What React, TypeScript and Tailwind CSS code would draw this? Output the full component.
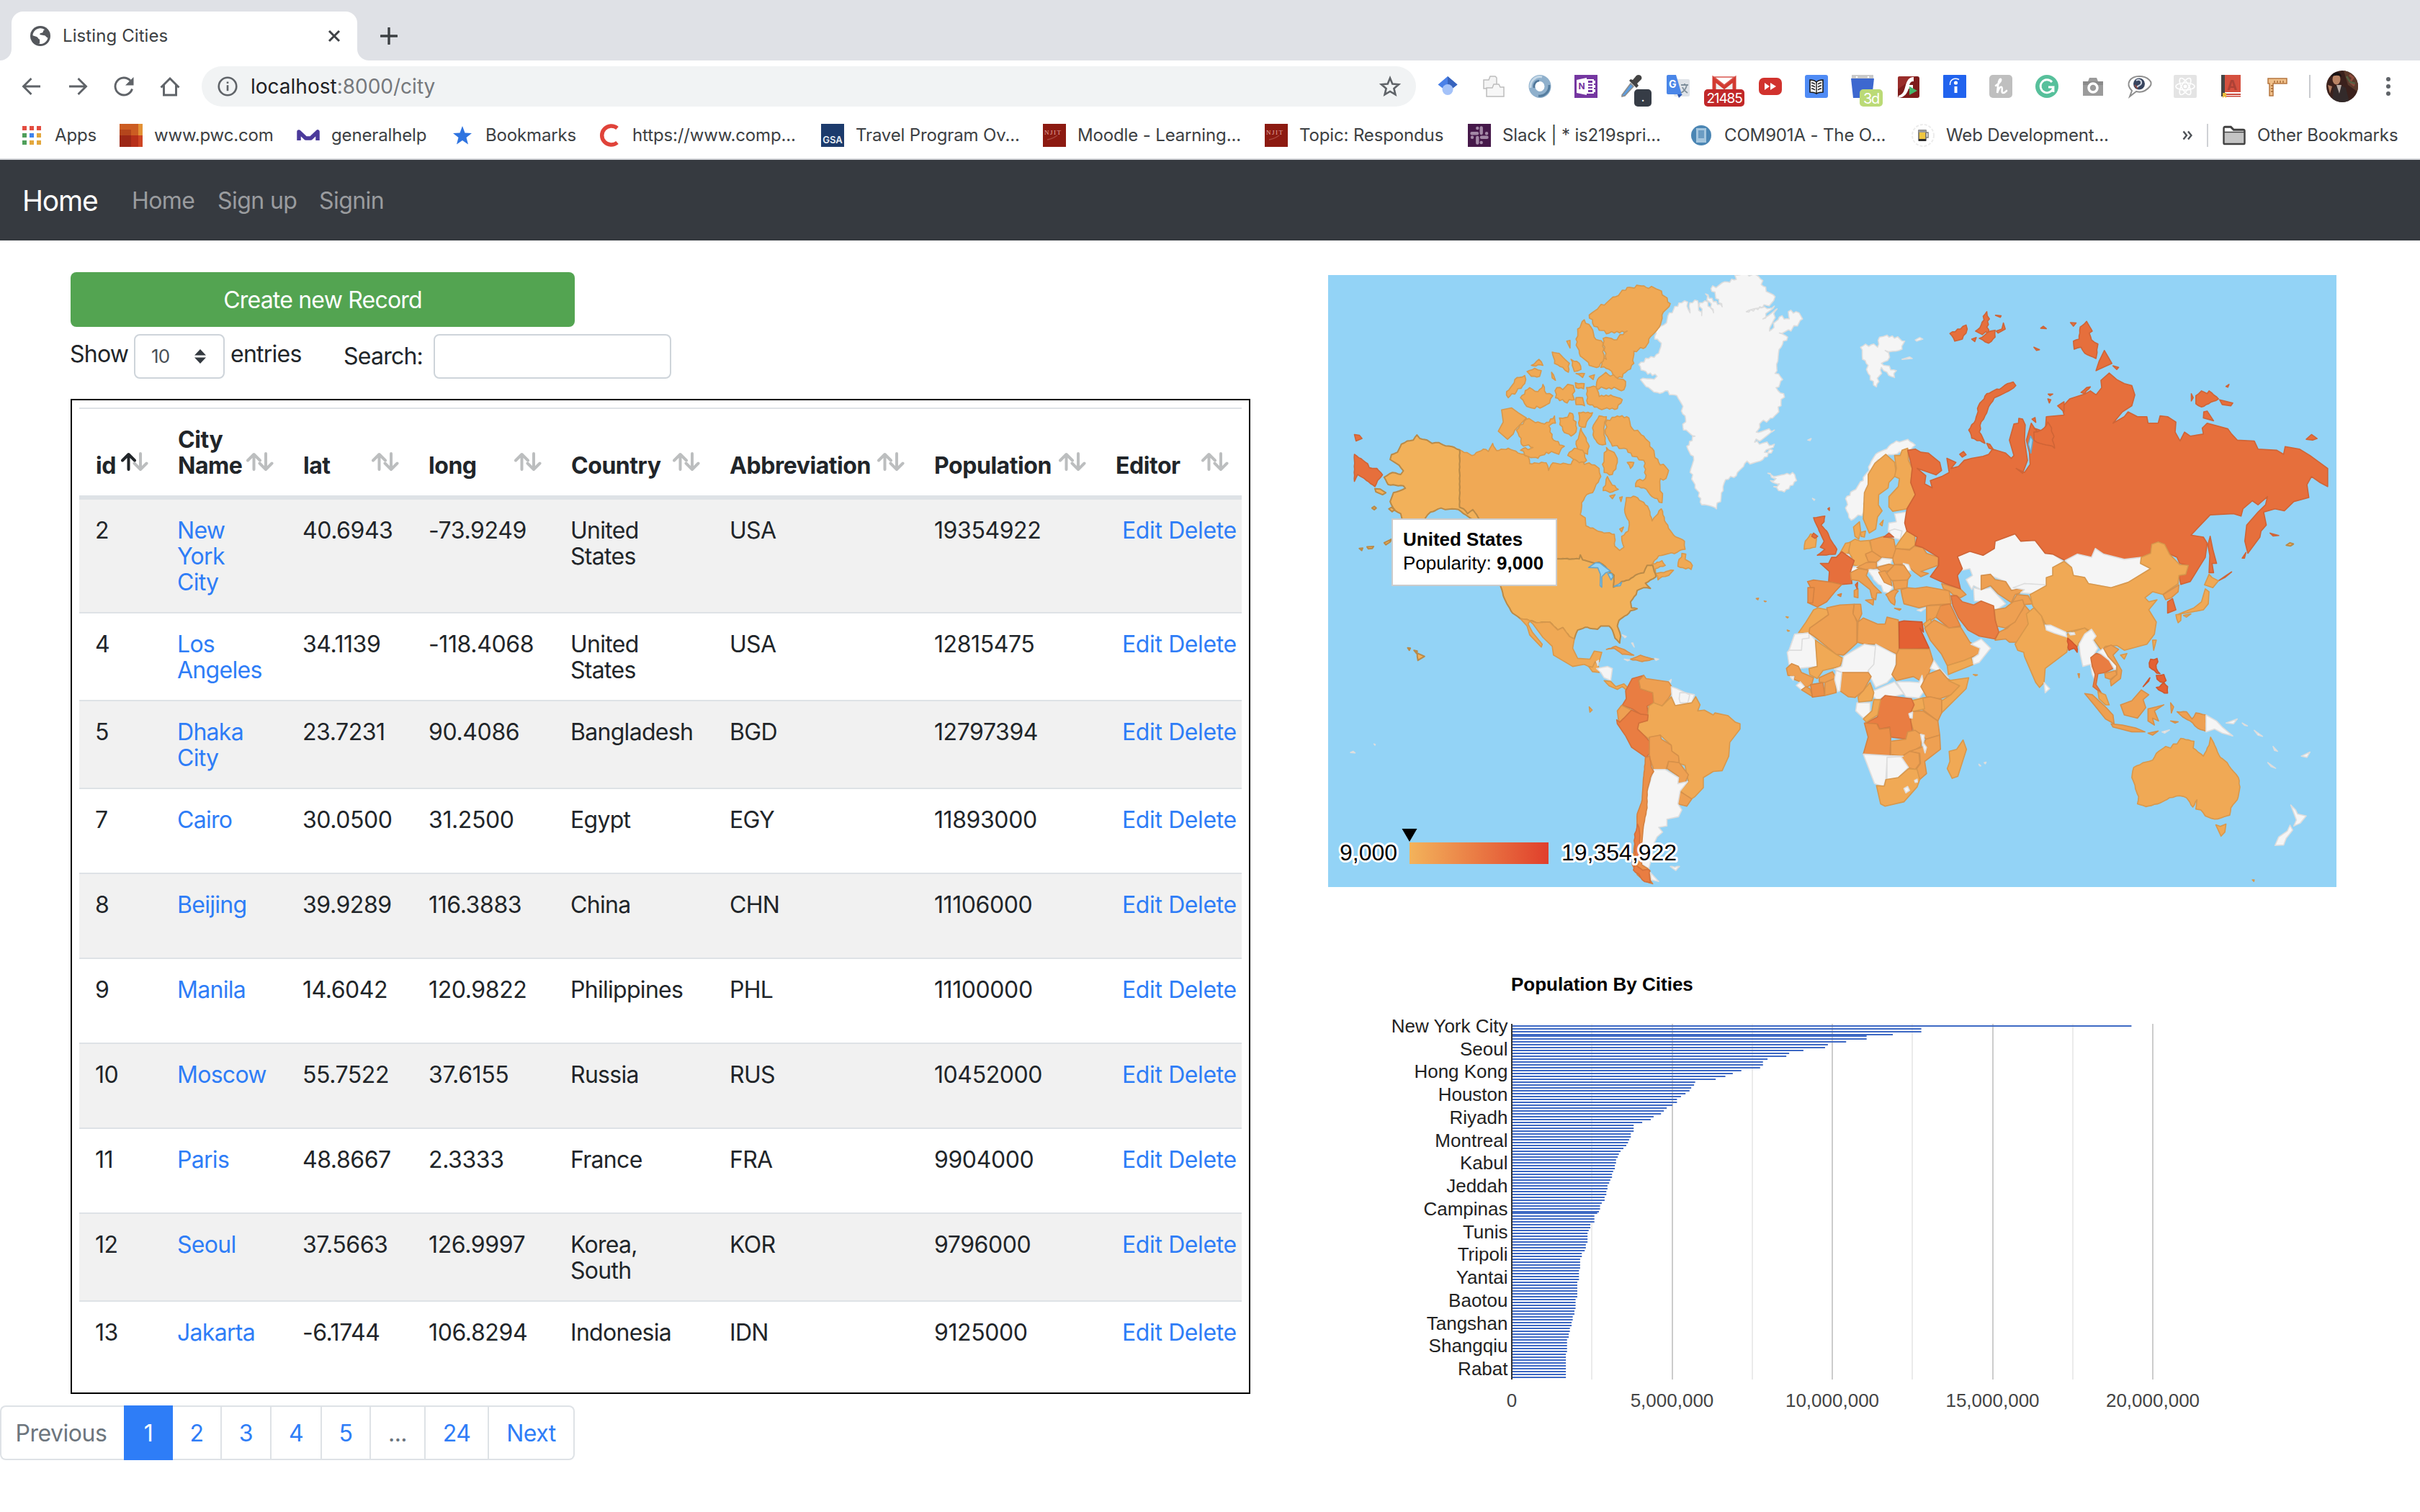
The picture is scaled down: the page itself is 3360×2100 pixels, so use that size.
import React from "react";

/* ---------- world map geometry ---------- */

type Shape = { f: string; d: string; j?: number };

const OCEAN = "#93d3f6";
const O1 = "#f0a955";
const O2 = "#eea052";
const O3 = "#ec9049";
const O4 = "#e97d42";
const R1 = "#e66f3c";
const R2 = "#e46133";
const W = "#f5f5f5";
const US = "#f2b15a";

const strokes: Record<string, string> = {
  [O1]: "#d8984c",
  [O2]: "#d6904a",
  [O3]: "#d48242",
  [O4]: "#d2703b",
  [R1]: "#cf6436",
  [R2]: "#cd572e",
  [W]: "#dddddd",
  [US]: "#b98a48",
  [OCEAN]: "#6aa5c6",
};

const parse = (d: string) => d.trim().split(/\s+/).map((p) => p.split(",").map(Number));

// Roughens a coast line: every edge is cut into short pieces that are pushed off the line.
function outline(d: string, j = 0) {
  const pts = parse(d);
  let out = "";
  pts.forEach((p, i) => {
    const q = pts[(i + 1) % pts.length];
    out += (i ? "L" : "M") + p[0] + "," + p[1];
    if (!j) return;
    const dx = q[0] - p[0];
    const dy = q[1] - p[1];
    const len = Math.hypot(dx, dy);
    const n = Math.floor(len / 7);
    for (let k = 1; k < n; k++) {
      const t = k / n;
      const h = Math.sin((p[0] + q[0]) * 12.9898 + (p[1] + q[1]) * 78.233 + k * 37.7) * 43758.5453;
      const r = (h - Math.floor(h) - 0.5) * 2 * j;
      out += `L${(p[0] + dx * t - (dy / len) * r).toFixed(1)},${(p[1] + dy * t + (dx / len) * r).toFixed(1)}`;
    }
  });
  return out + "Z";
}

const west: Shape[] = [
  { f: W, j: 5, d: "970,243 1000,228 1030,215 1038,190 1018,180 1020,158 1045,145 1062,115 1100,90 1118,88 1125,115 1124,90 1148,85 1160,122 1154,90 1170,85 1196,115 1172,68 1222,100 1188,55 1230,38 1265,32 1260,21 1325,21 1345,35 1340,45 1382,75 1370,92 1295,112 1350,100 1380,98 1345,130 1388,105 1365,160 1395,125 1425,130 1422,112 1445,112 1465,130 1430,160 1395,165 1420,175 1400,200 1390,235 1382,265 1405,280 1385,300 1408,315 1400,345 1375,375 1335,390 1325,410 1380,405 1320,435 1380,440 1350,460 1375,455 1345,478 1290,488 1265,518 1232,528 1225,555 1205,600 1160,590 1140,540 1125,510 1135,470 1115,445 1140,420 1105,405 1110,370 1085,320 1050,308 1025,312 1000,300 975,280 1005,278 1025,272 985,258" },
  { f: W, j: 4, d: "1360,512 1378,520 1410,515 1435,510 1447,530 1410,558 1378,545 1395,538 1368,530 1385,525" },
  { f: O1, j: 2, d: "428,454 465,468 500,452 515,458 528,438 540,456 575,450 605,462 635,470 640,488 690,486 697,505 710,486 765,490 780,470 800,465 805,490 820,486 850,500 855,520 830,560 812,565 797,585 793,614 808,622 810,642 850,656 896,663 897,692 912,703 925,695 918,668 938,655 940,630 928,610 932,572 960,570 985,584 1000,600 1010,630 1038,600 1052,635 1075,665 1108,680 1110,700 1085,708 1030,716 1005,740 1040,728 1050,740 1020,748 1022,768 1012,740 995,740 985,758 960,764 940,776 918,780 910,788 893,794 895,764 868,742 835,734 800,726 793,714 790,724 500,724 488,626 468,606 452,612 428,596" },
  { f: O1, j: 3, d: "1028,776 1020,760 1045,758 1075,752 1060,765 1040,768" },
  { f: O1, j: 3, d: "1088,742 1100,710 1112,712 1110,725 1132,740 1128,750 1095,745" },
  { f: O1, j: 4, d: "820,120 850,100 900,75 935,52 985,48 1030,58 1065,92 1040,120 1035,145 1000,180 990,200 955,210 955,240 930,262 920,275 895,275 880,255 855,250 862,225 872,230 862,178 895,182 935,160 880,165 850,158 830,140" },
  { f: O1, j: 4, d: "805,132 825,150 835,175 862,190 865,225 850,248 820,245 790,215 780,180 785,155" },
  { f: O1, j: 4, d: "845,280 870,262 900,274 930,285 925,305 880,300 840,302" },
  { f: O1, j: 3, d: "812,300 840,298 850,322 885,318 920,330 905,352 850,352 815,340" },
  { f: O1, j: 3, d: "708,212 735,220 760,240 757,262 740,250 715,240" },
  { f: O1, j: 2, d: "765,230 790,240 795,255 775,260" },
  { f: O1, j: 2, d: "780,265 806,265 800,275" },
  { f: O1, d: "752,185 762,183 762,202" },
  { f: O1, d: "706,262 712,268 718,282 708,276" },
  { f: O1, d: "820,272 836,268 832,280" },
  { f: O1, j: 4, d: "570,310 595,280 625,270 625,290 600,310 575,325" },
  { f: O1, j: 4, d: "612,325 640,300 665,310 680,292 690,315 710,320 700,338 655,352 625,340" },
  { f: O1, j: 2, d: "645,245 668,230 680,245" },
  { f: O1, j: 2, d: "632,260 655,252 675,258 670,272 645,272" },
  { f: O1, j: 5, d: "718,325 722,300 740,305 755,292 772,295 775,330 745,335" },
  { f: O1, j: 2, d: "778,288 805,290 803,303 780,300" },
  { f: O1, j: 2, d: "780,325 800,325 806,345 780,342" },
  { f: O1, d: "555,355 585,350 605,362 630,375 595,405 590,415 573,428 545,408 560,385" },
  { f: O1, j: 4, d: "600,405 630,378 665,385 685,390 715,370 718,388 698,395 712,430 745,445 728,465 690,460 665,475 635,470 612,455 650,448 615,440 608,420" },
  { f: O1, j: 5, d: "730,375 770,365 782,400 765,420 740,405" },
  { f: O1, j: 2, d: "788,362 830,362 812,385 808,398 790,395" },
  { f: O1, j: 2, d: "780,440 795,400 820,445 815,465 785,455" },
  { f: O1, j: 2, d: "830,400 850,370 872,372 864,400 870,440 850,440 835,425" },
  { f: O1, j: 4, d: "874,380 905,370 940,375 945,395 985,420 1010,450 1030,485 1060,505 1052,525 1035,525 1040,585 1010,570 985,548 960,545 965,530 990,525 985,480 950,470 925,450 890,445 880,430 868,405" },
  { f: O1, j: 4, d: "860,490 872,448 895,460 905,485 890,515 865,510" },
  { f: O1, j: 3, d: "755,468 775,450 800,455 812,480 790,486 770,476" },
  { f: O1, j: 3, d: "862,555 875,520 885,535 908,552 890,558" },
  { f: O1, j: 2, d: "935,485 955,485 945,500" },
  { f: O1, d: "882,568 898,565 890,575" },
  { f: O1, d: "912,572 920,570 916,582" },
  { f: O1, d: "912,650 924,645 918,657" },
  { f: US, j: 1, d: "299,417 308,426 330,430 345,438 365,436 385,444 405,446 428,454 428,596 440,600 452,612 468,602 480,615 492,630 470,628 440,612 425,602 405,600 385,602 372,598 355,604 340,608 325,622 315,640 260,640 250,612 232,604 218,582 228,560 245,556 264,549 258,543 212,540 200,522 225,510 250,515 258,506 245,492 218,478 222,466 240,460 252,440 270,432 288,430" },
  { f: US, j: 1, d: "500,724 722,724 790,724 793,714 800,726 835,734 850,732 868,742 880,756 895,764 893,794 910,788 918,780 940,776 960,764 985,758 995,740 1012,740 1022,768 1005,776 990,784 1005,797 985,795 965,802 962,812 945,830 948,845 965,847 945,852 935,862 910,876 905,890 915,915 912,932 898,920 890,900 880,890 855,890 845,898 808,893 785,900 775,922 760,916 740,894 725,900 700,880 660,882 632,874 612,872 588,858 575,840 560,815 552,792 555,770 540,730" },
  { f: OCEAN, d: "818,745 840,733 852,734 868,744 884,754 870,758 858,768 858,794 853,790 854,762 846,746" },
  { f: OCEAN, d: "876,760 888,760 892,768 886,776" },
  { f: OCEAN, d: "895,792 910,786 918,782 914,790" },
  { f: US, d: "172,550 188,551 205,560 195,565 175,558" },
  { f: US, d: "214,600 222,596 232,602 224,607" },
  { f: US, d: "163,598 170,594 176,598 170,602" },
  { f: US, d: "200,684 222,675 218,682 205,689" },
  { f: US, d: "148,694 168,693 164,698 152,699" },
  { f: US, d: "125,698 135,697 132,703" },
  { f: US, d: "300,957 322,965 302,975 300,965" },
  { f: US, d: "290,950 300,952 298,958" },
  { f: US, d: "271,944 279,945 276,950" },
  { f: R1, j: 1, d: "110,465 150,488 155,498 178,500 195,516 180,530 172,545 140,525 120,515 110,532" },
  { f: R1, d: "110,416 125,418 133,426 115,432" },
  { f: O1, d: "612,872 632,874 660,882 700,880 725,900 740,894 760,916 775,922 770,945 785,970 822,972 835,952 858,955 850,978 838,980 830,992 818,990 805,985 770,990 712,962 708,940 680,918 650,885 640,878 635,885 648,905 678,935 675,942 640,912 632,890" },
  { f: O1, d: "818,990 830,992 838,978 848,990 850,1005 830,1003" },
  { f: W, d: "842,978 848,975 846,988" },
  { f: W, d: "842,995 875,990 890,995 885,1025 865,1018 855,1005" },
  { f: O1, d: "865,1025 885,1027 900,1040 925,1033 940,1045 935,1050 920,1040 905,1047 880,1038" },
  { f: O2, j: 1, d: "872,948 900,940 925,948 955,962 920,960 895,945" },
  { f: O2, j: 1, d: "945,972 975,962 1015,972 980,978" },
  { f: W, d: "926,972 942,974 936,976" },
  { f: W, d: "1018,970 1030,972 1022,975" },
  { f: W, d: "920,912 932,916 928,919" },
  { f: W, d: "948,932 952,932 956,942" },
  { f: W, d: "1060,1028 1068,1022 1066,1030" },
  { f: O4, d: "930,1050 950,1020 985,1012 970,1025 975,1045 1012,1055 1015,1080 995,1088 998,1110 990,1120 975,1108 950,1095 920,1086 932,1070" },
  { f: O2, d: "985,1012 992,1020 1060,1028 1075,1048 1060,1068 1040,1088 1015,1080 1012,1055 975,1045 970,1025" },
  { f: W, d: "1068,1040 1085,1045 1110,1055 1138,1060 1130,1080 1080,1087 1070,1065" },
  { f: W, d: "1092,1070 1094,1055 1110,1055 1124,1060 1118,1080 1095,1080" },
  { f: O1, d: "1015,1080 1040,1088 1068,1065 1080,1087 1130,1080 1142,1065 1155,1085 1148,1100 1168,1098 1195,1110 1200,1105 1240,1112 1262,1128 1276,1132 1276,1145 1245,1178 1242,1212 1222,1248 1195,1250 1165,1265 1165,1290 1140,1312 1125,1320 1095,1298 1120,1275 1115,1258 1110,1235 1092,1230 1088,1210 1070,1200 1068,1185 1035,1160 1002,1170 985,1160 966,1145 970,1130 996,1124 1000,1088" },
  { f: O2, d: "908,1120 905,1100 918,1086 948,1098 925,1118 912,1128" },
  { f: O4, d: "903,1122 912,1128 925,1118 948,1098 975,1108 998,1110 996,1124 970,1130 966,1145 985,1160 1002,1175 1003,1205 992,1215 948,1190 930,1162 905,1132" },
  { f: O2, d: "1002,1165 1035,1160 1038,1170 1068,1185 1070,1200 1090,1212 1092,1228 1060,1225 1052,1245 1015,1245 1002,1215" },
  { f: O2, d: "1060,1225 1092,1228 1112,1250 1120,1258 1110,1278 1088,1278 1090,1262 1055,1242" },
  { f: O2, d: "1090,1300 1100,1302 1130,1318 1115,1336 1087,1330" },
  { f: W, d: "1015,1245 1050,1245 1090,1265 1088,1280 1118,1275 1095,1298 1088,1330 1100,1345 1090,1362 1055,1368 1055,1385 1030,1388 1042,1400 1025,1412 1015,1430 1010,1460 1000,1490 980,1480 975,1440 985,1380 990,1340 995,1300 1008,1265" },
  { f: O3, j: 1, d: "990,1215 1003,1212 1008,1240 1015,1250 1005,1265 995,1300 995,1340 985,1380 978,1430 978,1480 1003,1495 1005,1520 1012,1528 985,1520 965,1505 950,1480 955,1440 965,1400 965,1355 980,1320 985,1260" },
  { f: O4, j: 5, d: "952,1478 975,1490 1003,1495 1005,1525 980,1518 960,1500" },
  { f: O4, j: 2, d: "957,1405 966,1380 972,1400 974,1440 968,1480 958,1460" },
  { f: W, d: "1005,1500 1030,1522 1008,1518" },
  { f: W, j: 2, d: "1065,1485 1093,1485 1082,1495" },
  { f: O1, d: "820,1090 829,1098 822,1103" },
  { f: W, d: "98,1203 106,1200 112,1204" },
  { f: W, d: "169,1182 173,1183 172,1185" },
  { f: O2, d: "1325,822 1332,821 1330,825" },
  { f: O2, d: "1349,828 1355,829 1352,830" },
  { f: W, d: "1481,430 1491,426 1488,431" },
  { f: W, d: "1495,574 1502,577 1500,579" },
];

const east: Shape[] = [
  { f: W, j: 5, d: "255,200 290,192 300,200 305,175 325,170 372,185 365,205 340,210 320,208 332,225 310,240 350,258 345,275 325,262 310,250 297,298 275,265 275,245 260,230" },
  { f: W, d: "400,182 412,176 420,180 404,185" },
  { f: W, d: "365,230 385,224 392,228" },
  { f: W, j: 4, d: "215,575 235,555 262,530 280,490 295,465 330,445 350,432 380,428 400,442 380,455 345,465 322,470 295,485 280,510 272,545 265,580 262,610 230,628 218,605" },
  { f: O1, d: "322,465 345,485 350,515 330,535 328,548 303,565 302,590 312,605 300,620 295,650 278,660 262,625 265,560 275,540 275,515 293,487" },
  { f: O1, d: "345,468 360,468 365,455 380,450 382,480 392,500 388,535 400,565 378,600 340,606 330,595 330,570 355,545 358,525 345,520 350,500" },
  { f: O1, d: "306,638 315,628 312,642" },
  { f: W, d: "345,612 375,608 372,635 378,655 362,675 345,672 328,655 330,635 350,632" },
  { f: W, d: "330,655 345,650 365,655 360,676 343,672" },
  { f: O1, d: "236,645 252,632 255,655 250,675 240,668" },
  { f: O1, d: "255,658 268,655 265,670 256,668" },
  { f: O1, d: "362,675 378,655 398,662 400,690 385,700 345,698" },
  { f: O2, d: "345,698 385,702 398,692 420,696 430,710 462,720 460,740 415,755 435,760 415,768 400,758 388,748 368,737 345,738 340,725" },
  { f: W, d: "368,735 382,738 388,752 378,755" },
  { f: O2, d: "280,678 316,668 343,675 348,700 340,722 310,720 285,705" },
  { f: R1, d: "316,670 330,660 343,670" },
  { f: O1, d: "222,685 240,675 255,680 278,678 285,705 268,715 280,735 250,742 232,738 232,720 225,710" },
  { f: O1, d: "200,710 215,685 228,683 222,710 215,712" },
  { f: W, d: "216,712 225,714 224,728 218,722" },
  { f: O2, d: "268,712 285,705 312,722 295,732 275,730" },
  { f: W, d: "298,735 312,722 338,725 335,736 302,742" },
  { f: W, d: "228,745 250,742 252,752 232,755" },
  { f: O2, d: "245,745 270,733 297,732 297,748 270,750" },
  { f: O2, d: "298,745 330,737 345,740 330,753 310,757" },
  { f: W, j: 2, d: "272,752 298,750 315,762 322,780 340,795 330,810 315,805 310,790 290,775" },
  { f: O2, d: "330,753 345,738 370,740 388,765 378,778 340,778 318,765" },
  { f: O2, d: "303,757 320,753 335,775 338,790 318,782" },
  { f: O2, d: "340,778 380,776 378,795 345,800" },
  { f: O2, j: 2, d: "322,812 345,800 355,803 345,820 345,838 330,825" },
  { f: O2, d: "345,846 362,848 358,851" },
  { f: R1, d: "148,735 170,735 178,720 190,720 205,706 238,728 228,755 232,785 205,787 170,780 172,755" },
  { f: O3, d: "114,780 130,776 180,782 205,787 187,805 165,830 140,843 115,832 125,800" },
  { f: O3, d: "115,795 132,795 128,833 115,832" },
  { f: R1, j: 1, d: "130,622 160,618 158,632 150,640 165,655 178,680 192,700 188,712 140,715 160,700 148,695 158,680 145,655 138,640" },
  { f: O1, j: 1, d: "108,680 122,662 138,668 135,695 105,700" },
  { f: R1, d: "125,668 130,660 141,668 134,673" },
  { f: R1, d: "168,600 172,597 172,604" },
  { f: O2, d: "228,758 250,748 275,752 270,765 290,790 310,808 298,808 295,825 285,820 280,800 250,778 230,775" },
  { f: O2, d: "268,826 290,824 288,838" },
  { f: O2, d: "238,802 248,797 248,820 238,818" },
  { f: R1, d: "241,788 247,782 246,798" },
  { f: O3, d: "194,813 204,810 202,817" },
  { f: O2, d: "362,800 380,795 400,797 430,793 490,803 495,835 440,838 410,845 370,835 365,815" },
  { f: W, d: "405,851 428,845 415,854" },
  { f: O2, d: "470,785 520,798 535,812 520,820 500,812 490,803 475,798" },
  { f: W, d: "512,718 525,705 545,705 580,715 610,698 612,680 665,662 680,680 718,678 745,710 765,712 793,730 765,745 765,765 748,770 748,790 690,785 660,805 640,780 600,765 575,765 575,800 555,790 550,800 535,775 552,765 545,748 525,752" },
  { f: W, d: "555,795 575,800 600,795 640,835 615,850 575,828 557,828" },
  { f: O2, d: "575,765 600,762 612,775 640,780 655,802 690,795 695,803 665,812 655,832 620,810 600,790 575,800" },
  { f: W, d: "660,795 690,785 748,788 715,810 680,808 690,800" },
  { f: O2, d: "655,835 670,812 700,815 712,835 680,838" },
  { f: R1, d: "380,455 400,452 415,460 435,462 465,485 470,505 455,516 405,500 428,518 425,538 445,548 440,530 470,520 490,510 484,475 508,485 495,500 515,495 530,480 550,475 580,470 595,465 605,452 640,462 655,475 662,468 650,430 662,390 674,388 675,376 685,378 692,392 690,430 698,480 685,512 668,500 690,510 705,490 703,460 695,430 708,388 718,402 735,420 715,400 745,410 748,372 795,368 790,348 810,328 850,316 865,308 880,318 895,300 893,282 915,264 935,280 955,290 975,295 983,318 975,345 950,360 925,388 955,372 965,360 990,372 1015,372 1018,388 1045,388 1050,370 1070,372 1092,385 1090,410 1103,432 1115,410 1130,420 1165,415 1162,400 1175,388 1230,402 1240,415 1255,430 1300,432 1310,452 1360,455 1378,465 1382,446 1420,452 1448,468 1495,500 1495,545 1475,535 1452,520 1440,540 1445,572 1405,582 1380,605 1355,600 1325,608 1332,640 1318,655 1315,670 1283,710 1275,680 1280,640 1310,608 1330,590 1335,570 1310,590 1295,580 1270,600 1265,618 1245,612 1183,615 1132,665 1165,670 1175,685 1170,720 1150,750 1130,780 1105,787 1100,765 1118,762 1125,740 1102,735 1095,720 1075,712 1062,688 1045,682 1028,688 1025,710 1000,720 955,725 920,718 900,712 878,698 868,720 830,712 798,728 765,712 745,710 718,678 680,680 665,662 612,680 610,698 580,715 545,705 512,718 525,748 512,765 520,798 480,785 440,768 462,740 462,720 420,696 400,690 405,670 378,655 372,635 378,600 400,565 388,535 392,500" },
  { f: R1, j: 4, d: "752,385 762,400 770,450 740,440 715,430 715,410 735,405" },
  { f: OCEAN, d: "700,440 706,420 712,430 707,462" },
  { f: R1, j: 2, d: "660,286 667,295 640,312 610,325 600,340 585,370 575,385 570,410 585,438 550,425 542,405 560,380 568,345 590,315 630,300 645,290" },
  { f: R1, j: 1, d: "820,185 835,180 838,150 855,136 870,160 862,165 868,182 885,192 880,228 850,215 840,200 822,205" },
  { f: R1, d: "812,139 827,140 820,148" },
  { f: R1, d: "902,208 922,240 880,258 888,235" },
  { f: R1, d: "925,246 940,250 935,255" },
  { f: R1, d: "733,153 740,148 748,154" },
  { f: R1, d: "715,200 730,206 722,208" },
  { f: R1, j: 3, d: "492,166 520,155 535,145 535,165 525,180 505,185" },
  { f: R1, j: 4, d: "560,160 575,145 590,112 597,130 590,150 595,165 570,165" },
  { f: R1, j: 2, d: "570,178 600,160 612,158 612,175 595,190" },
  { f: R1, d: "615,160 630,155 634,140 639,155 620,165" },
  { f: R1, d: "613,121 628,122 626,126" },
  { f: R1, d: "550,180 562,176 558,186" },
  { f: R1, j: 1, d: "1145,320 1160,308 1175,315 1180,308 1205,328 1160,348 1145,340" },
  { f: R1, d: "1208,330 1243,338 1238,345 1215,342" },
  { f: R1, d: "1166,360 1175,358 1192,382 1165,375" },
  { f: R1, d: "1133,315 1138,325 1133,333" },
  { f: R1, d: "1225,297 1233,292 1230,299" },
  { f: R1, d: "1438,428 1452,416 1467,426 1455,430" },
  { f: R1, d: "518,465 528,458 535,466 525,472" },
  { f: R1, d: "590,438 598,440 608,454 596,450" },
  { f: R1, j: 2, d: "840,312 855,300 865,298 850,315" },
  { f: R1, d: "753,316 765,316 758,320" },
  { f: R1, d: "752,328 760,330 756,338" },
  { f: R1, d: "778,345 795,335 795,360 786,352" },
  { f: R1, d: "710,378 718,374 720,386" },
  { f: R1, d: "1183,668 1190,700 1200,735 1188,735 1192,758 1180,758 1182,715 1177,690" },
  { f: R1, d: "1205,778 1225,765 1240,756 1222,770" },
  { f: R1, d: "1268,722 1278,708 1274,722" },
  { f: R1, d: "1342,660 1365,666 1350,667" },
  { f: US, d: "1385,690 1395,684 1404,687 1396,692" },
  { f: W, d: "798,728 830,712 868,720 878,698 900,712 955,725 1000,720 998,735 1025,748 965,782 920,795 860,785 850,770 820,765 815,745" },
  { f: O1, d: "795,730 815,745 820,765 850,770 860,785 920,795 965,782 1025,748 998,735 1000,720 1025,710 1028,688 1045,682 1062,688 1075,712 1102,738 1125,740 1118,762 1100,765 1098,785 1075,800 1058,812 1030,805 1010,820 1020,830 1042,825 1020,850 1040,880 1035,910 1015,935 955,950 935,938 905,940 895,950 875,925 870,905 850,895 800,905 745,885 735,865 712,840 705,812 748,790 748,770 765,765 765,745" },
  { f: O2, d: "1058,812 1100,788 1098,805 1080,820 1065,825" },
  { f: R1, d: "1070,830 1083,822 1092,850 1070,858" },
  { f: O1, d: "1180,762 1188,770 1205,778 1190,795 1168,788" },
  { f: O1, d: "1170,798 1180,805 1178,835 1165,850 1120,858 1100,860 1140,845 1160,830" },
  { f: O1, j: 2, d: "1092,862 1106,862 1105,876 1098,882" },
  { f: O1, d: "1112,864 1132,860 1120,868" },
  { f: O2, d: "612,925 622,905 645,895 665,875 685,850 690,838 712,862 700,885 675,930 650,930 640,922" },
  { f: O1, d: "665,935 700,885 695,860 715,845 735,865 745,895 798,917 806,908 850,895 862,905 835,930 828,945 808,935 802,955 745,995 742,1030 730,1042 720,1030 690,965 688,955 672,950" },
  { f: W, d: "745,888 760,888 800,905 802,917 770,908 748,900" },
  { f: W, d: "808,907 822,906 824,911 812,912" },
  { f: O2, d: "610,850 640,845 660,830 685,825 690,840 665,880 640,895 615,890" },
  { f: O4, d: "495,815 510,815 525,830 555,838 575,828 608,840 612,875 622,905 612,922 570,915 540,900 515,870 500,840" },
  { f: O3, d: "465,840 492,835 500,850 520,890 490,895 455,868" },
  { f: O2, d: "430,840 468,838 455,868 430,882" },
  { f: O1, d: "422,885 440,872 445,885 428,895" },
  { f: O2, d: "425,895 450,875 490,895 520,892 545,930 572,945 568,960 530,975 485,988 470,960 440,925" },
  { f: O1, d: "485,988 530,975 548,968 555,985 488,1010" },
  { f: W, d: "552,970 568,960 572,945 548,935 575,922 600,945 570,980 555,985" },
  { f: R2, j: 2, d: "805,920 815,928 828,940 830,955 822,945 808,950" },
  { f: W, d: "742,1030 757,1045 745,1055" },
  { f: W, d: "835,935 850,910 868,898 880,915 872,925 885,945 868,970 872,990 880,1030 870,1010 865,985 845,990 838,960" },
  { f: O4, d: "866,968 880,958 895,960 905,968 920,975 925,995 905,1005 885,1008 880,1035 895,1057 872,1040 878,1010 870,990" },
  { f: W, d: "885,955 900,945 912,965 935,990 930,1000 915,975 895,960" },
  { f: O2, d: "900,945 920,937 940,948 925,962 948,1000 945,1020 920,1038 918,1025 935,1010 935,988 912,965" },
  { f: O2, d: "903,1007 932,1000 935,1010 918,1022 905,1018" },
  { f: O1, d: "885,1052 905,1060 915,1085 905,1085 888,1070" },
  { f: O2, d: "850,1057 870,1060 905,1090 925,1110 928,1132 905,1120 875,1085" },
  { f: O2, d: "920,1132 950,1135 985,1142 1010,1152 975,1152 925,1140" },
  { f: O2, d: "945,1085 975,1075 1000,1048 1020,1060 1005,1072 1012,1092 990,1118 955,1110" },
  { f: O2, d: "1018,1095 1040,1090 1060,1085 1035,1100 1046,1125 1030,1118 1035,1135 1018,1125" },
  { f: O2, d: "1018,1155 1045,1150 1030,1160" },
  { f: W, d: "1055,1152 1075,1147 1062,1155" },
  { f: O2, d: "1078,1080 1086,1090 1080,1105" },
  { f: O2, d: "1078,1125 1098,1127 1090,1130" },
  { f: R2, j: 3, d: "1025,972 1042,970 1040,995 1050,1008 1035,1000 1022,992" },
  { f: R2, j: 4, d: "1040,1012 1060,1010 1066,1025 1050,1028" },
  { f: R2, j: 3, d: "1040,1042 1060,1030 1070,1040 1070,1056 1055,1052" },
  { f: R2, d: "1005,1040 1023,1018 1020,1026" },
  { f: O2, j: 1, d: "1095,1102 1120,1102 1135,1120 1145,1105 1172,1110 1172,1150 1150,1143 1130,1125 1110,1115" },
  { f: W, d: "1172,1110 1200,1125 1215,1140 1243,1162 1215,1155 1195,1145 1172,1152" },
  { f: W, d: "1225,1130 1255,1120 1245,1132" },
  { f: W, d: "1268,1130 1282,1137 1275,1136" },
  { f: W, d: "1300,1148 1322,1163 1310,1160" },
  { f: W, d: "1350,1188 1362,1200 1354,1198" },
  { f: W, d: "1336,1228 1357,1242 1345,1238" },
  { f: W, d: "1425,1212 1448,1202 1440,1215" },
  { f: O1, d: "1030,925 1040,925 1033,950" },
  { f: O1, d: "945,962 962,958 955,972" },
  { f: O2, d: "832,1008 836,1008 835,1018" },
  { f: O1, j: 1, d: "975,1265 980,1240 1005,1228 1030,1222 1040,1205 1065,1188 1078,1192 1085,1182 1095,1182 1105,1168 1140,1175 1138,1192 1165,1212 1180,1185 1184,1165 1195,1185 1200,1195 1210,1215 1228,1228 1245,1250 1258,1265 1262,1288 1255,1320 1238,1340 1235,1358 1212,1365 1195,1368 1170,1360 1158,1345 1145,1343 1148,1320 1137,1338 1120,1315 1102,1310 1075,1315 1050,1328 1012,1337 990,1330 993,1312" },
  { f: O1, d: "1198,1382 1210,1386 1225,1380 1222,1400 1212,1410" },
  { f: W, d: "1397,1333 1410,1345 1415,1355 1438,1360 1422,1378 1405,1385 1412,1370" },
  { f: W, d: "1395,1383 1402,1395 1385,1415 1378,1432 1355,1433 1365,1412 1388,1397" },
  { f: O1, d: "1295,1518 1300,1518 1299,1522" },
  { f: O1, d: "90,907 110,880 130,850 142,845 168,850 170,862 120,895 118,907" },
  { f: W, d: "65,950 80,910 118,907 135,925 140,990 90,995 65,985 60,955" },
  { f: W, d: "80,910 118,907 118,920 100,922 98,950 65,950" },
  { f: O2, d: "118,907 120,895 170,862 165,845 200,838 238,836 235,855 245,880 245,932 210,962 190,960 135,918" },
  { f: O2, d: "238,836 255,836 258,860 248,880 235,860" },
  { f: O2, d: "248,880 262,870 300,885 320,885 325,868 355,875 357,962 295,935 265,935 246,930" },
  { f: R2, d: "357,880 370,877 418,880 422,905 412,895 437,945 358,947" },
  { f: O1, d: "135,925 190,960 208,970 200,990 155,1000 140,1020 120,1010 118,995 140,990" },
  { f: W, d: "210,965 265,935 295,940 290,990 275,1005 205,1005 185,997 205,990" },
  { f: W, d: "295,935 350,962 345,1010 325,1030 295,1042 280,1015 275,1000 290,985" },
  { f: O2, d: "357,947 438,947 447,975 435,1010 418,1028 395,1015 350,1025 338,1010 350,985 350,960" },
  { f: W, d: "440,995 450,975 465,995 488,1018 465,1002" },
  { f: W, d: "350,1028 385,1028 410,1030 418,1012 425,1050 410,1068 375,1065" },
  { f: W, d: "290,1050 345,1028 370,1058 340,1065 320,1062 300,1075 285,1060" },
  { f: O2, d: "432,1010 465,998 485,1020 518,1038 495,1060 465,1070 430,1065 415,1040" },
  { f: O1, d: "488,1025 542,1018 535,1045 470,1105 470,1075 495,1060 518,1038" },
  { f: O2, d: "420,1068 440,1065 470,1072 470,1105 460,1125 420,1097" },
  { f: O1, d: "390,1075 420,1068 425,1095 390,1102" },
  { f: O2, d: "390,1102 420,1100 460,1125 465,1160 430,1170 395,1148 388,1125" },
  { f: O4, d: "305,1075 320,1062 355,1066 390,1070 397,1085 385,1110 392,1148 378,1170 335,1165 332,1140 305,1145 300,1133 268,1130 300,1115" },
  { f: W, d: "383,1107 393,1103 392,1118 386,1117" },
  { f: O3, d: "265,1130 298,1132 305,1145 332,1142 335,1165 333,1210 262,1207 275,1165" },
  { f: W, d: "245,1080 280,1080 280,1105 262,1118 242,1100" },
  { f: O1, d: "262,1120 285,1100 290,1072 308,1072 300,1110 270,1128" },
  { f: O1, d: "248,1065 280,1030 290,1055 285,1075 250,1078" },
  { f: O2, d: "205,1005 275,1005 283,1015 262,1050 240,1067 222,1065 200,1050" },
  { f: O2, d: "58,995 72,983 90,990 98,1005 130,1018 125,1035 110,1042 95,1028 78,1022 80,1015 62,1012" },
  { f: W, d: "68,1015 78,1015 76,1024" },
  { f: W, d: "84,1037 95,1028 108,1042 98,1048" },
  { f: O2, d: "98,1048 110,1040 120,1045 128,1065" },
  { f: O3, d: "122,1035 155,1030 160,1062 127,1066" },
  { f: O2, d: "160,1022 188,1022 190,1055 160,1062" },
  { f: O2, d: "145,1018 180,1003 190,1018 160,1030 145,1028" },
  { f: W, d: "186,1022 190,1000 205,1005 200,1050 194,1052" },
  { f: O2, d: "335,1175 375,1170 380,1152 400,1148 418,1160 415,1188 370,1212 335,1208" },
  { f: O2, d: "428,1170 465,1160 467,1195 425,1225 430,1255 412,1270 402,1245 414,1230 412,1205 385,1200 418,1190" },
  { f: W, d: "414,1158 424,1160 422,1180 430,1190 426,1204 420,1185" },
  { f: O2, d: "360,1215 385,1200 410,1205 412,1230 400,1245 380,1240" },
  { f: W, d: "262,1207 333,1211 368,1212 325,1220 322,1270 315,1288 292,1280" },
  { f: W, d: "325,1215 362,1213 382,1240 355,1265 325,1272" },
  { f: O1, d: "297,1285 318,1286 322,1270 355,1265 382,1243 405,1245 412,1270 405,1288 370,1325 320,1336 308,1330" },
  { f: W, d: "370,1292 380,1287 385,1297 375,1303" },
  { f: W, d: "398,1272 405,1269 406,1276 400,1277" },
  { f: O1, d: "490,1200 510,1195 527,1172 536,1195 513,1262 498,1267 485,1243 492,1225" },
  { f: O1, d: "57,867 63,868 61,870" },
  { f: O1, d: "60,900 66,902 62,903" },
  { f: O1, d: "554,1010 565,1011 560,1013" },
  { f: W, d: "569,1232 574,1236 571,1236" },
  { f: W, d: "583,1228 588,1227 586,1231" },
];

function Country({ s }: { s: Shape }) {
  return (
    <path
      d={outline(s.d, s.j)}
      fill={s.f}
      stroke={strokes[s.f]}
      strokeWidth={s.f === US ? 2 : 1.6}
      strokeLinejoin="round"
      vectorEffect="non-scaling-stroke"
    />
  );
}

function WorldMap() {
  const gx = 720 / 1568;
  const gy = 880 / 1568;
  return (
    <div className="relative h-[850px] w-[1400px]">
      <svg width="1400" height="850" viewBox="1844 382 1400 850" className="block" fontFamily='"Liberation Sans", Arial, sans-serif'>
        <defs>
          <linearGradient id="scale" x1="0" x2="1">
            <stop offset="0" stopColor="#f3b35b" />
            <stop offset="1" stopColor="#e03f2c" />
          </linearGradient>
        </defs>
        <rect x="1844" y="382" width="1400" height="850" fill={OCEAN} />
        <g transform={`translate(1830 370) scale(${gx} ${gy})`}>
          {west.map((s, i) => (
            <Country key={i} s={s} />
          ))}
        </g>
        <g transform={`translate(2450 370) scale(${820 / 1568} ${gy})`}>
          {east.map((s, i) => (
            <Country key={i} s={s} />
          ))}
        </g>
        <rect x="1957" y="1170" width="193" height="30" fill="url(#scale)" />
        <path d="M1946.5 1151h21L1957 1169z" fill="#000" />
        <g fontSize="32" stroke="#fff" strokeWidth="6" strokeLinejoin="round" paintOrder="stroke">
          <text x="1860" y="1195">9,000</text>
          <text x="2168" y="1195">19,354,922</text>
        </g>
      </svg>
      <div className="absolute left-[88px] top-[338px] h-[94px] w-[230px] border-2 border-[#cccccc] bg-white pl-[14px] pt-[11px] font-['Liberation_Sans',Arial,sans-serif] text-[26px] leading-[33px] text-black">
        <div className="font-bold">United States</div>
        <div>
          Popularity: <b>9,000</b>
        </div>
      </div>
    </div>
  );
}

/* ---------- bar chart ---------- */

const bars = [
  1365, 996, 996, 946, 900, 900, 864, 832, 827, 789, 764, 759, 726, 718, 718, 713, 680, 665, 652, 635, 599, 597, 592, 589, 582,
  574, 567, 567, 559, 549, 544, 539, 526, 521, 506, 491, 491, 491, 486, 486, 483, 481, 478, 473, 468, 465, 463, 460, 460, 458,
  458, 455, 453, 453, 450, 448, 445, 445, 443, 443, 440, 440, 435, 432, 432, 430, 427, 422, 422, 422, 415, 415, 412, 410, 410,
  410, 410, 407, 407, 405, 400, 400, 397, 397, 397, 397, 395, 395, 395, 395, 392, 392, 392, 392, 392, 392, 389, 389, 389, 389,
  387, 387, 384, 384, 382, 382, 379, 379, 377, 377, 374, 374, 374, 374, 374, 372, 372, 372, 372, 372, 372, 372, 372, 372,
];

const chartCities = [
  "New York City", "Seoul", "Hong Kong", "Houston", "Riyadh", "Montreal", "Kabul", "Jeddah",
  "Campinas", "Tunis", "Tripoli", "Yantai", "Baotou", "Tangshan", "Shangqiu", "Rabat",
];

const ticks = ["0", "5,000,000", "10,000,000", "15,000,000", "20,000,000"];

function BarChart() {
  return (
    <svg width="1400" height="700" viewBox="1844 1300 1400 700" className="mt-[68px] block" fontFamily='"Liberation Sans", Arial, sans-serif' fontSize="26">
      <text x="2098" y="1376" fontWeight="700">Population By Cities</text>
      {[1, 2, 3, 4].map((i) => (
        <g key={i}>
          <rect x={Math.round(2098 + 222.5 * (i - 0.5))} y="1422" width="2" height="494" fill="#ebebeb" />
          <rect x={Math.round(2098 + 222.5 * i)} y="1422" width="2" height="494" fill="#cccccc" />
        </g>
      ))}
      {bars.map((b, i) => (
        <rect key={i} x="2099" y={1424 + i * 4 - (i > 3 ? 2 : 0) - (i > 65 ? 2 : 0)} width={(b - 277) / 1.2645} height="2" fill="#3e69c4" />
      ))}
      <rect x="2098" y="1422" width="2" height="494" fill="#333333" />
      {chartCities.map((c, i) => (
        <text key={c} x="2093.5" y={1434 + i * 31.74} textAnchor="end" fill="#222">{c}</text>
      ))}
      {ticks.map((t, i) => (
        <text key={t} x={2099 + 222.5 * i} y="1954" textAnchor="middle" fill="#444">{t}</text>
      ))}
    </svg>
  );
}

/* ---------- browser chrome ---------- */

function Ico({ children, size = 32 }: { children: React.ReactNode; size?: number }) {
  return (
    <svg width={size} height={size} viewBox="0 0 32 32" className="block shrink-0 overflow-visible">
      {children}
    </svg>
  );
}

const F = "Inter, sans-serif";

const extensions: React.ReactNode[] = [
  <Ico>
    <path d="M16 2 L2.500 13.500 L9.500 19 A7 7 0 0 1 22.500 19 L29.500 13.500Z" fill="#4a80e8" />
    <path d="M16 2 L29.500 13.500 L22.500 19 A7 7 0 0 0 16 14Z" fill="#3763bd" />
    <circle cx="16" cy="20.500" r="7.500" fill="#a4c2f9" />
  </Ico>,
  <Ico>
    <path d="M2 7h7l2-5h7l2 2v15H2z" fill="#f4f4f4" stroke="#bdbdbd" strokeWidth="1.500" />
    <path d="M6 18h8l2-5h7l2 4h5v13H6z" fill="#f7f7f7" stroke="#bdbdbd" strokeWidth="1.500" />
  </Ico>,
  <Ico>
    <ellipse cx="16" cy="16" rx="11" ry="11.500" fill="none" stroke="#8fb0cc" strokeWidth="9" />
    <path d="M3 18a13 14 0 0 1 16-15" fill="none" stroke="#c6d9e8" strokeWidth="3" />
    <path d="M29 14a13 14 0 0 1-15 15" fill="none" stroke="#557d9f" strokeWidth="3" />
    <path d="M8 18a8 8 0 0 1 7-10" fill="none" stroke="#4f7598" strokeWidth="2.500" />
  </Ico>,
  <Ico>
    <rect width="32" height="32" fill="#7537a1" />
    <path d="M3 7l14-3v24L3 25z" fill="#fff" />
    <rect x="18" y="7" width="8" height="18" fill="none" stroke="#fff" strokeWidth="2" />
    <path d="M19 12h6M19 16h6M19 20h6M28 8v4M28 14v4M28 20v4" stroke="#fff" strokeWidth="2" />
    <text x="5.500" y="20" fontSize="12" fontWeight="700" fill="#7537a1" fontFamily={F}>N</text>
  </Ico>,
  <div className="relative">
    <Ico>
      <path d="M2 28l12-16 4 4L6 29l-4 1z" fill="#5b9de0" stroke="#8b8b8b" strokeWidth="1.500" />
      <path d="M12 8l10 10 3-3-2-3 6-6c2-4-3-8-7-5l-5 6-3-1z" fill="#444" />
    </Ico>
    <div className="absolute left-[19px] top-[20px] flex h-6 w-6 justify-center rounded-[5px] bg-[#363c46] text-[18px] leading-[22px] text-white">.</div>
  </div>,
  <Ico>
    <rect x="10" y="6" width="22" height="24" rx="2" fill="#dfe3e8" />
    <path d="M0 2a2 2 0 0 1 2-2h11l8 27H2a2 2 0 0 1-2-2z" fill="#4a86e8" />
    <path d="M15 27h7l-5 5z" fill="#2f5bb5" />
    <path d="M20 14h10M25 12v2M28 14c-1 5-4 9-8 11M22 17c1 3 4 6 7 8" stroke="#80909c" strokeWidth="1.800" fill="none" />
    <text x="3" y="18" fontSize="14" fontWeight="700" fill="#fff" fontFamily={F}>G</text>
  </Ico>,
  <div className="relative">
    <Ico>
      <rect y="3" width="32" height="24" fill="#eee" />
      <path d="M2 27V6l14 11L30 6v21" fill="none" stroke="#d23a31" strokeWidth="5" />
      <path d="M2 3h28L16 14z" fill="#fff" stroke="#d9574f" strokeWidth="1.500" />
    </Ico>
    <div className="absolute -left-3 top-[20px] flex h-6 w-14 justify-center whitespace-nowrap rounded-[5px] bg-[#c12829] text-[19px] leading-[25px] tracking-[-0.06em] text-white">
      21485
    </div>
  </div>,
  <Ico>
    <rect x="0" y="4" width="32" height="24" rx="7" fill="#d1322d" />
    <path d="M8 11l7 5-7 5zM16 11l8 5-8 5z" fill="#fff" />
  </Ico>,
  <Ico>
    <rect width="32" height="32" rx="3" fill="#4f8bf5" />
    <path d="M16 10c-3-3-6-3-9-3v17c3 0 6 0 9 2 3-2 6-2 9-2V7c-3 0-6 0-9 3z" fill="#fff" stroke="#1a1a1a" strokeWidth="1.600" />
    <path d="M16 10v16M9 11c2 0 3 0 5 2M9 15c2 0 3 0 5 2M9 19c2 0 3 0 5 2M23 11c-2 0-3 0-5 2M23 15c-2 0-3 0-5 2M23 19c-2 0-3 0-5 2" stroke="#1a1a1a" strokeWidth="1.400" fill="none" />
  </Ico>,
  <div className="relative">
    <Ico>
      <path d="M1 0h30v6H1z" fill="#c9c9c9" />
      <path d="M0 5h32l-3 27H3z" fill="#3d68cf" />
      <circle cx="8" cy="3" r="1.300" fill="#fff" />
      <circle cx="24" cy="3" r="1.300" fill="#fff" />
    </Ico>
    <div className="absolute left-[12px] top-[20px] flex h-6 w-8 justify-center rounded-[5px] bg-[#bbda76] text-[20px] leading-[26px] tracking-[-0.06em] text-white">3d</div>
  </div>,
  <Ico>
    <rect x="1" y="2" width="30" height="30" rx="3" fill="#7e1c1b" />
    <path d="M26 2H3a2 2 0 0 0-2 2v16z" fill="#a53530" opacity=".7" />
    <path d="M2 29c7-2 8-8 10-15 2-6 4-11 11-11v6c-4 0-5 2-6 5h5v5h-6c-2 6-5 12-14 13z" fill="#fff" />
    <path d="M17 16l11 6-11 6z" fill="#45b469" />
  </Ico>,
  <Ico>
    <rect width="32" height="32" rx="1" fill="#2163ee" />
    <circle cx="17.500" cy="11" r="2.600" fill="#fff" />
    <path d="M15.500 16h4v9h-4z" fill="#fff" />
    <path d="M9.500 14C9 7 15 3 22 6.500" stroke="#fff" strokeWidth="1.500" fill="none" />
  </Ico>,
  <Ico>
    <rect width="32" height="32" rx="5" fill="#bfbfbf" />
    <path d="M9 15c6-3 9-10 6-9s-3 12-4 19c2-6 4-9 6-8s-1 8 2 8 4-2 5-3" stroke="#fff" strokeWidth="2.600" fill="none" strokeLinecap="round" />
  </Ico>,
  <Ico>
    <circle cx="16" cy="16" r="16" fill="#57c09b" />
    <path d="M23 10a9 9 0 1 0 2 7h-7M25 17v7" stroke="#fff" strokeWidth="2.800" fill="none" />
  </Ico>,
  <Ico>
    <path d="M2 9h7l2-5h10l2 5h7v20H2z" fill="#9b9b9b" />
    <rect x="2" y="9" width="28" height="5" fill="#8a8a8a" />
    <circle cx="16" cy="18" r="6" fill="#9b9b9b" stroke="#fff" strokeWidth="3.500" />
  </Ico>,
  <Ico>
    <path d="M3 30l3-8C-4 12 4 2 16 2s20 8 15 14-12 9-19 7z" fill="#fff" stroke="#8e8e8e" strokeWidth="2" />
    <circle cx="16" cy="12.500" r="8" fill="#38455f" />
    <path d="M12 8c4-3 8 0 7 4s-6 2-6 6" stroke="#cdd3df" strokeWidth="2" fill="none" />
    <path d="M10 14c2 2 2 4 4 5" stroke="#8c4b45" strokeWidth="2" />
  </Ico>,
  <Ico>
    <rect width="32" height="32" rx="2" fill="#e4e4e4" />
    <g fill="none" stroke="#fff" strokeWidth="1.600">
      <ellipse cx="16" cy="16" rx="13" ry="5" />
      <ellipse cx="16" cy="16" rx="13" ry="5" transform="rotate(60 16 16)" />
      <ellipse cx="16" cy="16" rx="13" ry="5" transform="rotate(120 16 16)" />
    </g>
    <circle cx="16" cy="16" r="2.500" fill="#fff" />
  </Ico>,
  <Ico>
    <rect x="2" width="5" height="30" fill="#454545" />
    <rect x="7" width="22" height="24" fill="#d5503f" />
    <path d="M7 26h22v2H7zM7 29h22v1.500H7z" fill="#c9473a" />
    <path d="M4 25h5v7l-2.500-2L4 32z" fill="#e9bb3a" />
    <text x="10" y="21" fontSize="19" fontWeight="700" fill="#ad4135" fontFamily={F}>A</text>
  </Ico>,
  <Ico>
    <path d="M3 5h26v7H10v17H5V12H3z" fill="#f0c08a" stroke="#b5763f" strokeWidth="1.500" />
    <path d="M12 8v3M16 8v3M20 8v3M24 8v3M7 15h3M7 19h3M7 23h3" stroke="#a0642f" strokeWidth="1.300" />
  </Ico>,
];

function Bookmark({ icon, label, w, iw = 32 }: { icon: React.ReactNode; label: string; w: number; iw?: number }) {
  return (
    <div className="flex shrink-0 items-center" style={{ width: w }}>
      <div className="flex shrink-0 justify-center" style={{ width: iw }}>{icon}</div>
      <span className="ml-4 whitespace-nowrap tracking-[-0.006em]">{label}</span>
    </div>
  );
}

const njit = (
  <Ico>
    <rect width="32" height="32" fill="#8c1a11" />
    <text x="2" y="15" fontSize="9" fill="#e0a8a2" fontFamily="Liberation Serif, serif" letterSpacing="1.500">NJIT</text>
    <path d="M6 22c6-1 10-3 14-6" stroke="#a8483f" strokeWidth="1.500" fill="none" />
  </Ico>
);

function Chrome() {
  return (
    <>
      <div className="flex h-[84px] items-end bg-[#dfe1e6]">
        <svg width="16" height="16" viewBox="0 0 16 16" className="block"><path d="M0 16A16 16 0 0 0 16 0V16z" fill="#fff" /></svg>
        <div className="flex h-[68px] w-[480px] items-center rounded-t-2xl bg-white pl-[26px] pr-[23px]">
          <Ico size={28}>
            <circle cx="16" cy="16" r="16" fill="#54575c" />
            <path d="M14 4c-6 1-10 6-10 11l6 2c3 1 2 4 5 4v6c0 1-2 1-3 1 8 2 14-2 16-9-3-1-3-4-6-4l-6-1c-2-1 0-3 2-3 4 0 1-4 5-5-3-2-6-3-9-2z" fill="#fff" />
          </Ico>
          <span className="ml-[17px] grow text-[24px] tracking-[0.004em] text-[#3c4043]">Listing Cities</span>
          <svg width="18" height="18" viewBox="0 0 18 18"><path d="M2 2l14 14M16 2L2 16" stroke="#3f4246" strokeWidth="3" /></svg>
        </div>
        <svg width="16" height="16" viewBox="0 0 16 16" className="block"><path d="M16 16A16 16 0 0 1 0 0V16z" fill="#fff" /></svg>
        <svg width="24" height="24" viewBox="0 0 24 24" className="mb-[22px] ml-4"><path d="M12 1v22M1 12h22" stroke="#3c4043" strokeWidth="3.400" strokeLinecap="round" /></svg>
      </div>

      <div className="flex h-[72px] items-center">
        <div className="flex w-[280px] items-center gap-8 pl-[28px]">
          <Ico><path d="M28 16H5M15.500 5L4.500 16l11 11" stroke="#5f6368" strokeWidth="2.900" fill="none" /></Ico>
          <Ico><path d="M4 16h23M16.500 5l11 11-11 11" stroke="#5f6368" strokeWidth="2.900" fill="none" /></Ico>
          <Ico>
            <path d="M27.500 19.500A12 12 0 1 1 25 8" stroke="#5f6368" strokeWidth="2.900" fill="none" />
            <path d="M29.500 3v11.500H18z" fill="#5f6368" />
          </Ico>
          <Ico><path d="M3.500 17.500L16 5l12.500 12.500M7.500 14v14h17V14" stroke="#5f6368" strokeWidth="2.900" fill="none" /></Ico>
        </div>
        <div className="flex h-14 w-[1686px] items-center rounded-full bg-[#f1f3f4] pl-[22px] pr-[20px]">
          <Ico size={28}>
            <circle cx="16" cy="16" r="14" fill="none" stroke="#5f6368" strokeWidth="3" />
            <path d="M16 14v9M16 8.500v3" stroke="#5f6368" strokeWidth="3" />
          </Ico>
          <span className="ml-[18px] grow text-[28px] tracking-[0em] text-[#1f2124]">localhost<span className="text-[#75787c]">:8000/city</span></span>
          <Ico>
            <path d="M16 4.500l3.300 8 8.700.7-6.600 5.700 2 8.500L16 22.900l-7.400 4.500 2-8.500L4 13.200l8.700-.7z" fill="none" stroke="#5f6368" strokeWidth="2.600" />
          </Ico>
        </div>
        <div className="ml-[28px] flex items-center gap-8">
          {extensions.map((e, i) => (
            <React.Fragment key={i}>{e}</React.Fragment>
          ))}
        </div>
        <div className="ml-[28px] h-8 w-[2px] bg-[#c9cbcf]" />
        <svg width="44" height="44" viewBox="0 0 44 44" className="ml-[22px]">
          <defs><clipPath id="face"><circle cx="22" cy="22" r="22" /></clipPath></defs>
          <g clipPath="url(#face)">
            <rect width="44" height="44" fill="#3b211c" />
            <path d="M24 0h20v30L30 20z" fill="#5b3a2b" />
            <path d="M32 6l5 4-4 6 6 5" stroke="#8c4a3c" strokeWidth="3" fill="none" />
            <path d="M28 8l5 8 7 2" stroke="#566042" strokeWidth="2.500" fill="none" />
            <path d="M8 44l2-20 8-5 9 5 5 20z" fill="#332a2a" />
            <ellipse cx="14" cy="12" rx="5.500" ry="7.500" fill="#b98364" />
            <path d="M7 9c0-9 14-9 14 0-3-3-10-3-14 0z" fill="#1a1314" />
            <path d="M2 20l6 2-3 10z" fill="#b07a5e" />
            <path d="M14 20l4 12 3-12z" fill="#b9aca6" />
          </g>
        </svg>
        <div className="ml-[39px] flex flex-col gap-[4px]">
          <i className="block size-[6px] rounded-full bg-[#5f6368]" />
          <i className="block size-[6px] rounded-full bg-[#5f6368]" />
          <i className="block size-[6px] rounded-full bg-[#5f6368]" />
        </div>
      </div>

      <div className="flex h-[66px] items-center border-b-2 border-[#d5d7db] pl-[28px] text-[24px] text-[#3c4043]">
        <Bookmark w={138} label="Apps" icon={
          <svg width="26" height="26" viewBox="0 0 26 26">
            <path d="M0 0h6v6H0zM10 0h6v6h-6zM20 0h6v6h-6z" fill="#e34c40" />
            <path d="M0 10h6v6H0zM0 20h6v6H0z" fill="#4f9f5b" />
            <path d="M10 10h6v6h-6z" fill="#3f83ee" />
            <path d="M20 10h6v6h-6zM10 20h6v6h-6zM20 20h6v6h-6z" fill="#e3a73d" />
          </svg>
        } />
        <Bookmark w={246} label="www.pwc.com" icon={
          <Ico>
            <rect width="32" height="32" fill="#cc5c22" />
            <path d="M26 0h6v16h-6z" fill="#e39235" />
            <path d="M0 8h16v8H0z" fill="#b4451c" />
            <path d="M0 16h16v16H0z" fill="#9c2716" />
            <path d="M16 16h10v16H16z" fill="#b7301a" />
            <path d="M26 16h6v16h-6z" fill="#ce4524" />
          </Ico>
        } />
        <Bookmark w={214} label="generalhelp" icon={<Ico><path d="M3 23V11l9.500 9h7L29 11v12" fill="none" stroke="#4b3a9b" strokeWidth="5.500" strokeLinejoin="round" /></Ico>} />
        <Bookmark w={204} label="Bookmarks" icon={<Ico><path d="M16 3l3.500 9.500 9.500.5-7.500 6 2.500 9.500-8-5.500-8 5.500L10.500 19 3 13l9.500-.5z" fill="#2f74e0" /></Ico>} />
        <Bookmark w={310} label="https://www.comp..." icon={<Ico><path d="M27 6a13 13 0 1 0 0 20" fill="none" stroke="#e0433a" strokeWidth="5.500" /></Ico>} />
        <Bookmark w={308} label="Travel Program Ov..." icon={
          <Ico>
            <rect width="32" height="32" fill="#1c3b6c" />
            <text x="16" y="27" fontSize="13" textAnchor="middle" fontWeight="600" fill="#e8eef5" fontFamily={F}>GSA</text>
          </Ico>
        } />
        <Bookmark w={308} label="Moodle - Learning..." icon={njit} />
        <Bookmark w={282} label="Topic: Respondus" icon={njit} />
        <Bookmark w={308} label="Slack | * is219spri..." icon={
          <Ico>
            <rect width="32" height="32" fill="#46194a" />
            <path d="M5.500 13.300h7.500M13.300 6v.1M18.700 5.500V13M26 13.300h.1M19 18.700h7.500M18.700 26v.1M13.300 19v7.500M6 18.700h.1" stroke="#a388a6" strokeWidth="4.400" strokeLinecap="round" />
          </Ico>
        } />
        <Bookmark w={308} label="COM901A - The O..." icon={
          <Ico>
            <circle cx="16" cy="16" r="14" fill="#4b86b4" />
            <path d="M9 6h14v20H9z" fill="#a5c6de" />
            <path d="M12 9h8v11h-8z" fill="#6b9cc3" />
          </Ico>
        } />
        <Bookmark w={376} label="Web Development..." icon={
          <Ico>
            <circle cx="16" cy="16" r="15" fill="#fff" stroke="#ececec" strokeWidth="2" strokeDasharray="4 2" />
            <path d="M10 9h10v14H10z" fill="#efc63f" stroke="#666" strokeWidth="1.500" />
            <path d="M10 9h10v3H10z" fill="#999" />
            <path d="M20 12h3v7h-3" fill="none" stroke="#777" strokeWidth="1.500" />
            <path d="M10 21h10v3H10z" fill="#2b2b2b" />
          </Ico>
        } />
        <div className="flex w-[34px] items-center"><svg width="14" height="14" viewBox="0 0 14 14"><path d="M1.500 1.500L6 7l-4.500 5.500M8 1.500L12.500 7 8 12.500" fill="none" stroke="#4d5156" strokeWidth="2.400" /></svg></div>
        <div className="h-8 w-[2px] bg-[#cfd1d5]" />
        <div className="ml-[20px]">
          <Bookmark w={244} label="Other Bookmarks" icon={
            <Ico>
              <path d="M1.500 27V6q0-2 2-2h8l4 4h13q2 0 2 2v17q0 1-1 1H2.500q-1 0-1-1z" fill="#c4c4c4" stroke="#414141" strokeWidth="2.400" />
              <path d="M2 5h9l4 4h15v2.500H2z" fill="#fff" stroke="#414141" strokeWidth="1.600" />
            </Ico>
          } />
        </div>
      </div>
    </>
  );
}

/* ---------- page ---------- */

const rows = [
  ["2", "New York City", "40.6943", "-73.9249", "United States", "USA", "19354922", 158],
  ["4", "Los Angeles", "34.1139", "-118.4068", "United States", "USA", "12815475", 122],
  ["5", "Dhaka City", "23.7231", "90.4086", "Bangladesh", "BGD", "12797394", 122],
  ["7", "Cairo", "30.0500", "31.2500", "Egypt", "EGY", "11893000", 118],
  ["8", "Beijing", "39.9289", "116.3883", "China", "CHN", "11106000", 118],
  ["9", "Manila", "14.6042", "120.9822", "Philippines", "PHL", "11100000", 118],
  ["10", "Moscow", "55.7522", "37.6155", "Russia", "RUS", "10452000", 118],
  ["11", "Paris", "48.8667", "2.3333", "France", "FRA", "9904000", 118],
  ["12", "Seoul", "37.5663", "126.9997", "Korea, South", "KOR", "9796000", 122],
  ["13", "Jakarta", "-6.1744", "106.8294", "Indonesia", "IDN", "9125000", 118],
] as const;

const GRID = "grid grid-cols-[114px_174px_174px_198px_220px_284px_252px_198px]";

function Sort({ active = false }: { active?: boolean }) {
  return (
    <svg width="38" height="27" viewBox="0 0 38 27" className="absolute bottom-[33px] right-[18px]">
      <path d="M27 2v22M18.500 15.500L27 24l8.500-8.500" fill="none" stroke="#bcbebf" strokeWidth="4" strokeLinecap="round" strokeLinejoin="round" />
      <path d="M10.500 24V3M2 11.500L10.500 3l8.500 8.500" fill="none" stroke={active ? "#212529" : "#bcbebf"} strokeWidth="4" strokeLinecap="round" strokeLinejoin="round" />
    </svg>
  );
}

const heads = ["id", "City Name", "lat", "long", "Country", "Abbreviation", "Population", "Editor"];

function Table() {
  return (
    <div className="ml-[98px] mt-[28px] h-[1382px] w-[1638px] border-2 border-black px-[10px] pt-[10px] text-[32px] leading-[36px] tracking-[-0.022em] text-[#212529]">
      <div className={GRID + " h-[126px] border-b-4 border-t-2 border-[#dee2e6] font-bold tracking-[-0.014em]"}>
        {heads.map((h, i) => (
          <div key={h} className="relative flex items-end pb-[23px] pl-[23px]">
            <div className={i === 1 ? "w-24" : "whitespace-nowrap"}>{h}</div>
            <Sort active={i === 0} />
          </div>
        ))}
      </div>
      {rows.map((r, i) => (
        <div
          key={r[0]}
          className={GRID + " border-t-2 border-[#dee2e6] pt-[25px] " + (i % 2 ? "bg-white" : "bg-[#f1f1f1]")}
          style={{ height: r[7] }}
        >
          <div className="pl-[22px] tracking-[-0.014em]">{r[0]}</div>
          <div className={"pl-[22px] text-[#2e7df7] " + (i === 0 ? "w-[110px]" : "w-[150px]")}>{r[1]}</div>
          <div className="pl-[22px] tracking-[-0.014em]">{r[2]}</div>
          <div className="pl-[23px] tracking-[-0.012em]">{r[3]}</div>
          <div className={"pl-[22px] " + (r[4].includes(" ") ? "w-[150px]" : "")}>{r[4]}</div>
          <div className="pl-[23px]">{r[5]}</div>
          <div className="pl-[23px] tracking-[-0.013em]">{r[6]}</div>
          <div className="whitespace-nowrap pl-[32px] tracking-[-0.012em] text-[#2e7df7]">Edit Delete</div>
        </div>
      ))}
    </div>
  );
}

const pages: [string, number][] = [
  ["Previous", 172], ["1", 68], ["2", 68], ["3", 69], ["4", 70], ["5", 68], ["...", 76], ["24", 88], ["Next", 119],
];

export default function App() {
  return (
    <div className="h-[2100px] w-[3360px] overflow-hidden bg-white font-['Inter',sans-serif]">
      <Chrome />
      <nav className="flex h-[112px] items-center bg-[#363a40] pl-[31px] pt-[2px]">
        <span className="w-[152px] text-[39px] tracking-[-0.03em] text-white">Home</span>
        <span className="w-[119px] text-[32px] tracking-[-0.018em] text-[#9a9c9f]">Home</span>
        <span className="w-[141px] text-[32px] tracking-[-0.018em] text-[#9a9c9f]">Sign up</span>
        <span className="text-[32px] tracking-[-0.018em] text-[#9a9c9f]">Signin</span>
      </nav>
      <main className="flex">
        <div className="w-[1844px] shrink-0 pt-[44px]">
          <div className="ml-[98px] flex h-[76px] w-[700px] items-center justify-center rounded-lg bg-[#53a451] pt-[2px] text-[32px] tracking-[-0.025em] text-white">
            Create new Record
          </div>
          <div className="ml-[97px] mt-[10px] flex h-[62px] text-[32px] leading-[56px] tracking-[-0.024em] text-[#212529]">
            <span className="w-[89px]">Show</span>
            <div className="flex h-[62px] w-[126px] items-center rounded-lg border-2 border-[#ced4da] pl-[22px] pr-[24px] text-[26px] text-[#495057]">
              <span className="grow">10</span>
              <svg width="16" height="20" viewBox="0 0 16 20"><path d="M8 0l8 8.500H0zM8 20l8-8.500H0z" fill="#343a40" /></svg>
            </div>
            <span className="ml-2 w-[157px]">entries</span>
            <span className="w-[125px] leading-[62px]">Search:</span>
            <div className="h-[62px] w-[330px] rounded-lg border-2 border-[#ced4da]" />
          </div>
          <Table />
          <div className="mt-4 flex h-[76px] w-[798px] text-[32px] tracking-[-0.015em] text-[#2e7df7]">
            {pages.map(([p, w], i) => (
              <div
                key={p}
                style={{ width: w }}
                className={
                  "flex shrink-0 items-center justify-center border-2 pt-[2px] " +
                  (i === 1 ? "border-[#2e7df7] bg-[#2e7df7] text-white " : "border-[#dee2e6] ") +
                  (i === 0 ? "rounded-l-lg border-r-0 pr-1 text-[#6c757d] " : "") +
                  (i > 1 ? "border-l-0 " : "") +
                  (i === 6 ? "text-[#6c757d] " : "") +
                  (i === 8 ? "rounded-r-lg" : "")
                }
              >
                {p}
              </div>
            ))}
          </div>
        </div>
        <div className="w-[1400px] shrink-0 pt-12">
          <WorldMap />
          <BarChart />
        </div>
      </main>
    </div>
  );
}
